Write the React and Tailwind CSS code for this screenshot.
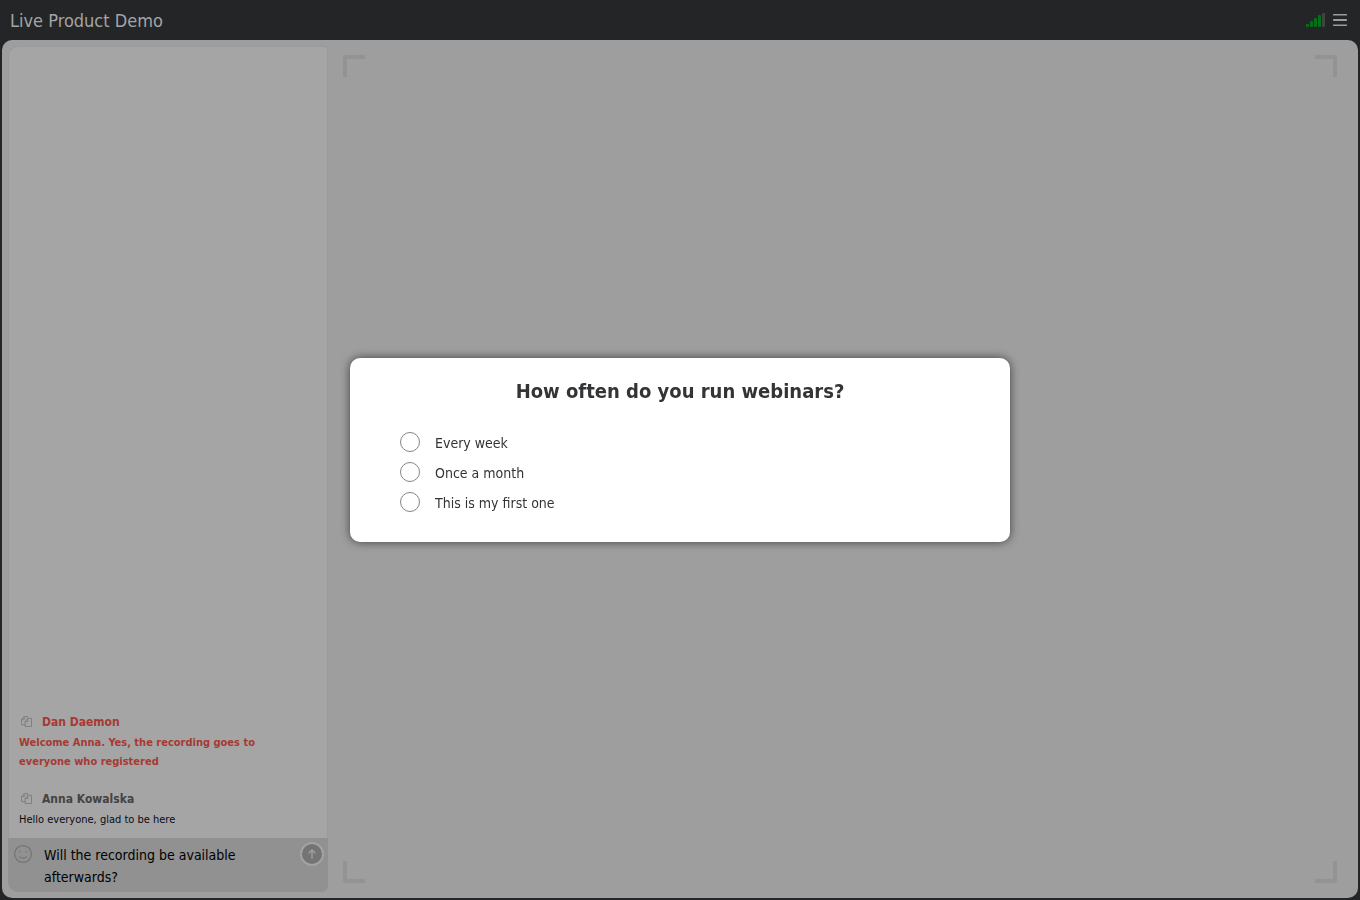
import { useState } from "react";

const messages = [
  {
    author: "Dan Daemon",
    text: "Welcome Anna. Yes, the recording goes to everyone who registered",
    host: true,
  },
  { author: "Anna Kowalska", text: "Hello everyone, glad to be here", host: false },
];

const options = ["Every week", "Once a month", "This is my first one"];

function SignalIcon() {
  return (
    <svg width="19" height="14" viewBox="0 0 19 14" role="img" aria-label="Connection quality">
      <g fill="#04701a">
        <rect x="0" y="11" width="3" height="3" rx="1" />
        <rect x="4" y="8" width="3" height="6" rx="1" />
        <rect x="8" y="5" width="3" height="9" rx="1" />
        <rect x="12" y="2" width="3" height="12" rx="1" />
      </g>
      <rect x="16" y="0" width="3" height="14" rx="1" fill="#414244" />
    </svg>
  );
}

function MenuIcon() {
  return (
    <svg width="14" height="12" viewBox="0 0 14 12" fill="#9a9b9c" aria-hidden="true">
      <rect y="0" width="14" height="1.6" rx="0.4" />
      <rect y="5.1" width="14" height="1.8" rx="0.4" />
      <rect y="10.4" width="14" height="1.6" rx="0.4" />
    </svg>
  );
}

function CopyIcon() {
  return (
    <svg
      width="11"
      height="11"
      viewBox="0 0 12 12"
      fill="none"
      stroke="currentColor"
      strokeLinejoin="round"
      aria-hidden="true"
    >
      <path d="M4.5 9.5h-4v-5.5l3-3.5h3.5v2" />
      <path d="M3.5 0.5v3.5h-3" />
      <path d="M4.5 11.5v-5.5l3-3.5h4v9z" />
      <path d="M7.5 2.5v3.5h-3" />
    </svg>
  );
}

function SmileIcon() {
  return (
    <svg width="20" height="20" viewBox="0 0 20 20" fill="none" stroke="#757575" aria-hidden="true">
      <circle cx="10" cy="10" r="8.4" strokeWidth="1.3" />
      <path d="M6.3 12.9c2 1.7 5.4 1.7 7.4 0" strokeWidth="1.2" strokeLinecap="round" />
      <circle cx="6.8" cy="7.8" r="0.8" fill="#757575" stroke="none" />
      <circle cx="13.2" cy="7.8" r="0.8" fill="#757575" stroke="none" />
    </svg>
  );
}

function ArrowIcon() {
  return (
    <svg
      width="10"
      height="12"
      viewBox="0 0 10 12"
      fill="none"
      stroke="#9c9c9c"
      strokeWidth="1.5"
      strokeLinecap="round"
      strokeLinejoin="round"
      aria-hidden="true"
    >
      <path d="M5 10.2V2M2 4.9l3-3.1 3 3.1" />
    </svg>
  );
}

function Message({ author, text, host }) {
  return (
    <li className={host ? "text-[#a63a33]" : "text-[#0b0b12]"}>
      <div className="flex h-[21px] items-center gap-[10px] pb-0.5 pl-0.5">
        <button type="button" aria-label="Copy message" className="text-[#7d7d7d]">
          <CopyIcon />
        </button>
        <span className={host ? "text-xs font-bold" : "text-xs font-bold text-[#434343]"}>
          {author}
        </span>
      </div>
      <p className={host ? "text-[11px] leading-[19px] font-bold" : "text-[11px] leading-[19px]"}>
        {text}
      </p>
    </li>
  );
}

function Chat() {
  const [draft, setDraft] = useState("Will the recording be available afterwards?");
  return (
    <aside className="flex w-80 shrink-0 flex-col overflow-hidden rounded-tl-[10px] rounded-tr-[4px] rounded-br-[6px] rounded-bl-[10px]">
      <div className="flex flex-1 flex-col justify-end rounded-tl-[10px] rounded-tr-[4px] border border-b-0 border-[#9a9a9a] bg-[#a5a5a5] pr-8 pb-[9px] pl-[10px]">
        <ul className="flex flex-col gap-[18px]">
          {messages.map((m) => (
            <Message key={m.author} {...m} />
          ))}
        </ul>
      </div>
      <form
        className="flex items-start bg-[#919191] px-1 pt-1 pb-1"
        onSubmit={(e) => e.preventDefault()}
      >
        <button type="button" aria-label="Insert emoji" className="mt-0.5 ml-px">
          <SmileIcon />
        </button>
        <textarea
          aria-label="Message"
          rows={2}
          value={draft}
          onChange={(e) => setDraft(e.target.value)}
          className="ml-[11px] block h-[46px] min-w-0 flex-1 resize-none overflow-hidden bg-transparent pt-0.5 pr-8 text-sm leading-[22px] text-black outline-none"
        />
        <button
          type="submit"
          aria-label="Send"
          className="flex size-6 items-center justify-center rounded-full border-2 border-[#a3a3a3] bg-[#747474]"
        >
          <ArrowIcon />
        </button>
      </form>
    </aside>
  );
}

function Stage() {
  return (
    <section aria-label="Stage" className="flex flex-1 flex-col justify-between px-[15px] py-[9px]">
      <div className="flex justify-between">
        <span className="size-[22px] rounded-tl-[3px] border-t-4 border-l-4 border-[#939393]" />
        <span className="size-[22px] rounded-tr-[3px] border-t-4 border-r-4 border-[#939393]" />
      </div>
      <div className="flex justify-between">
        <span className="size-[22px] rounded-bl-[3px] border-b-4 border-l-4 border-[#939393]" />
        <span className="size-[22px] rounded-br-[3px] border-r-4 border-b-4 border-[#939393]" />
      </div>
    </section>
  );
}

function Poll() {
  return (
    <div className="fixed inset-0 flex items-center justify-center p-4">
      <div
        role="dialog"
        aria-labelledby="poll-title"
        className="w-full max-w-[660px] rounded-[10px] bg-white px-[50px] pt-[18px] pb-[25px] text-[#333436] shadow-[0_0_10px_rgba(0,0,0,0.6)]"
      >
        <h2 id="poll-title" className="text-center text-xl leading-[30px] font-bold">
          How often do you run webinars?
        </h2>
        <fieldset aria-labelledby="poll-title" className="mt-[21px]">
          {options.map((option) => (
            <label key={option} className="flex h-[30px] items-center gap-[15px] text-sm">
              <input
                type="radio"
                name="poll"
                className="size-5 appearance-none rounded-full border border-[#858585] checked:border-[6px]"
              />
              <span className="pt-0.5">{option}</span>
            </label>
          ))}
        </fieldset>
      </div>
    </div>
  );
}

export default function App() {
  return (
    <div className="flex min-h-screen flex-col bg-[#242527] px-0.5 pb-0.5 font-['DejaVu_Sans_Condensed','Noto_Sans',sans-serif]">
      <header className="flex h-10 items-center justify-between pr-[11px] pl-2">
        <h1 className="pt-0.5 text-lg text-[#a4a4a5]">Live Product Demo</h1>
        <div className="flex items-center gap-2">
          <SignalIcon />
          <button type="button" aria-label="Menu">
            <MenuIcon />
          </button>
        </div>
      </header>
      <main className="flex flex-1 rounded-[10px] bg-[#9e9e9e] p-1.5">
        <Chat />
        <Stage />
      </main>
      <Poll />
    </div>
  );
}
